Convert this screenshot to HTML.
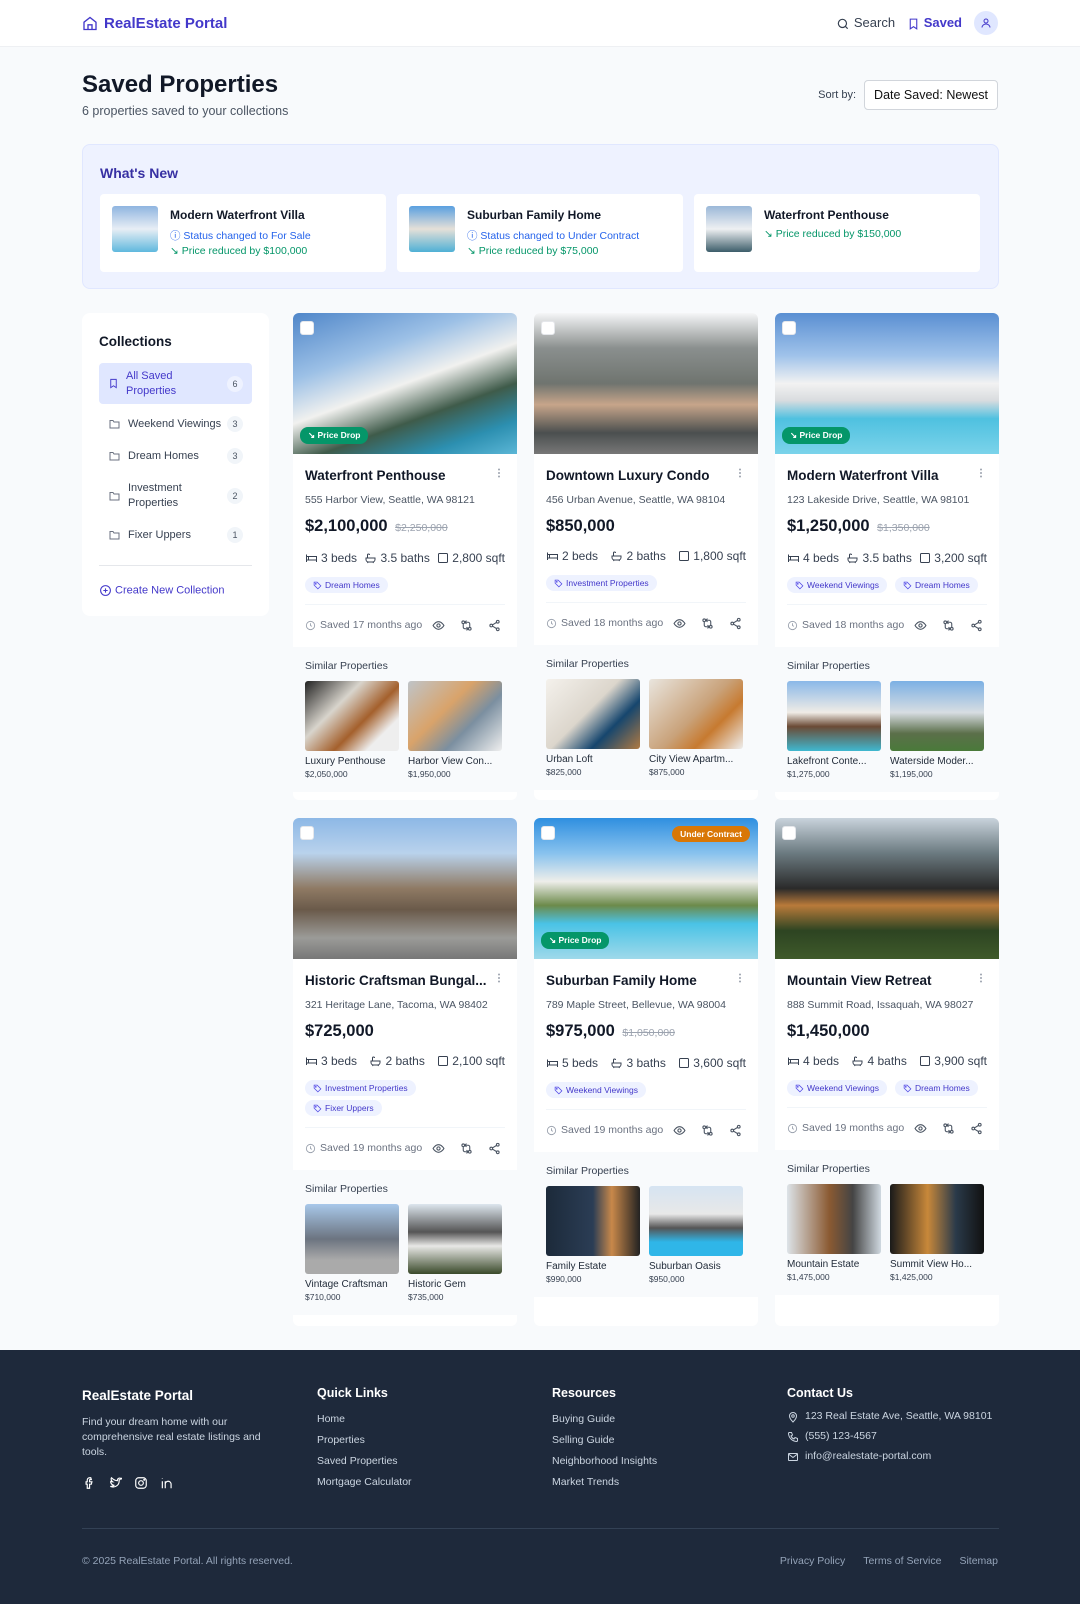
<!DOCTYPE html>
<html><head><meta charset="utf-8"><style>
*{box-sizing:border-box;margin:0;padding:0}
body{width:1080px;height:1604px;overflow:hidden;background:#f8fafc;font-family:"Liberation Sans",Arial,sans-serif;color:#111827}
svg{display:inline-block;vertical-align:middle}
.hdr{height:47px;background:#fff;border-bottom:1px solid #eef0f3;position:relative}
.logo{position:absolute;left:82px;top:15px;font-size:15px;font-weight:bold;color:#4338ca;display:flex;align-items:center;gap:6px}
.nav{position:absolute;right:82px;top:11px;display:flex;align-items:center;gap:12px;font-size:13px}
.av{width:24px;height:24px;border-radius:50%;background:#e0e7ff;display:flex;align-items:center;justify-content:center}
h1{position:absolute;left:82px;top:71px;font-size:24px;font-weight:bold}
.sub{position:absolute;left:82px;top:104px;font-size:12.5px;color:#4b5563}
.sort{position:absolute;right:82px;top:80px;display:flex;align-items:center;gap:8px;font-size:11px;color:#374151}
.sel{border:1px solid #d1d5db;background:#fff;border-radius:4px;height:30px;padding:0 9px;display:flex;align-items:center;font-size:12.5px;color:#111}
.wn{position:absolute;left:82px;top:144px;width:917px;height:145px;background:#eef2ff;border:1px solid #e0e7ff;border-radius:8px}
.wn h2{position:absolute;left:17px;top:20px;font-size:14px;font-weight:bold;color:#3730a3}
.wc{position:absolute;top:49px;width:286px;height:78px;background:#fff;border-radius:4px}
.wc .th{position:absolute;left:12px;top:12px;width:46px;height:46px;border-radius:3px}
.wc .t{position:absolute;left:70px;top:14px;font-size:12px;font-weight:bold;color:#111827}
.wc .l{position:absolute;left:70px;font-size:10.5px;white-space:nowrap}
.side{position:absolute;left:82px;top:313px;width:187px;height:303px;background:#fff;border-radius:8px}
.side h3{position:absolute;left:17px;top:21px;font-size:13.5px;font-weight:bold}
.ci{position:absolute;left:17px;width:153px;display:flex;align-items:center;font-size:11px;color:#374151;padding-left:9px}
.ci .n{margin-left:auto;margin-right:9px;width:16px;height:16px;border-radius:8px;background:#f1f5f9;font-size:9px;display:flex;align-items:center;justify-content:center;color:#4b5563}
.ci span.lb{margin-left:7px;line-height:15px}
.card{position:absolute;width:224px;background:#fff;border-radius:6px;overflow:hidden}
.img{height:141px;position:relative}
.cb{position:absolute;left:7px;top:8px;width:14px;height:14px;background:#fff;border-radius:3px;border:1px solid #e5e7eb}
.pd{position:absolute;left:7px;bottom:10px;background:#059669;color:#fff;font-size:8.5px;font-weight:bold;border-radius:8px;padding:3px 8px}
.uc{position:absolute;right:8px;top:8px;background:#d97706;color:#fff;font-size:8.5px;font-weight:bold;border-radius:8px;padding:3px 8px}
.bd{padding:12px 12px 0}
.tt{font-size:13.5px;font-weight:bold;line-height:20px;display:flex;justify-content:space-between;color:#111827}
.ad{font-size:10.5px;color:#4b5563;margin-top:6px;line-height:16px}
.pr{font-size:16.5px;font-weight:bold;margin-top:6px;line-height:24px}
.pr s{font-size:10.5px;color:#9ca3af;font-weight:normal;margin-left:3px}
.ft{font-size:12px;color:#374151;margin-top:9px;line-height:18px;display:flex;justify-content:space-between;white-space:nowrap}
.ft span{display:flex;align-items:center;gap:3px}
.tags{margin-top:10px;display:flex;flex-wrap:wrap;gap:4px 8px}
.tg{background:#eef2ff;color:#4338ca;font-size:8.5px;border-radius:8px;height:16px;padding:0 8px;display:flex;align-items:center;gap:3px}
.dv{height:1px;background:#f1f5f9;margin-top:11px}
.sv{display:flex;align-items:center;gap:4px;padding:10px 0 12px;font-size:10.5px;color:#6b7280;height:42px}
.sv .ic{margin-left:auto;display:flex;gap:15px;margin-right:4px}
.sim{background:#f8fafc;padding:12px 12px 12px}
.sim h4{font-size:10.5px;font-weight:normal;color:#374151;line-height:14px}
.ths{display:flex;gap:9px;margin-top:8px}
.ths div{width:94px}
.ths .p{height:70px;border-radius:3px}
.ths .nm{font-size:10px;color:#1f2937;margin-top:4px;line-height:13px;white-space:nowrap;overflow:hidden}
.ths .pp{font-size:8.5px;color:#374151;line-height:12px}
.foot{position:absolute;left:0;top:1350px;width:1080px;height:254px;background:#1e293b;color:#cbd5e1}
.fc{position:absolute;top:36px}
.fc h5{font-size:12.5px;font-weight:bold;color:#fff;margin-bottom:12px}
.fc p,.fc div{font-size:10.5px;line-height:15px}
.fc .r{margin-bottom:6px;display:flex;align-items:center;gap:6px}
</style></head><body>
<svg width="0" height="0" style="position:absolute"><defs>
<g id="eye" fill="none" stroke="#4b5563" stroke-width="2"><path d="M2 12s4-7 10-7 10 7 10 7-4 7-10 7S2 12 2 12z"/><circle cx="12" cy="12" r="3"/></g>
<g id="cmp" fill="none" stroke="#4b5563" stroke-width="2"><circle cx="6" cy="6" r="2.5"/><circle cx="18" cy="18" r="2.5"/><path d="M6 9v6a3 3 0 0 0 3 3h6M18 15V9a3 3 0 0 0-3-3H9"/><path d="M12 3l-3 3 3 3M12 21l3-3-3-3"/></g>
<g id="shr" fill="none" stroke="#4b5563" stroke-width="2"><circle cx="18" cy="5" r="2.5"/><circle cx="6" cy="12" r="2.5"/><circle cx="18" cy="19" r="2.5"/><path d="M8.5 10.7l7-4.2M8.5 13.3l7 4.2"/></g>
<g id="clk" fill="none" stroke="#9ca3af" stroke-width="2"><circle cx="12" cy="12" r="9"/><path d="M12 7v5l3 2"/></g>
<g id="bed" fill="none" stroke="#374151" stroke-width="2"><path d="M2 5v15M2 9h20v11M2 16h20M6 9v7"/></g>
<g id="bth" fill="none" stroke="#374151" stroke-width="2"><path d="M3 12h18v3a5 5 0 0 1-5 5H8a5 5 0 0 1-5-5zM6 12V6a2 2 0 0 1 4 0M7 20l-1 2M17 20l1 2"/></g>
<g id="sq" fill="none" stroke="#374151" stroke-width="2"><rect x="3" y="3" width="18" height="18" rx="2"/></g>
<g id="tag" fill="none" stroke="#4f46e5" stroke-width="2"><path d="M3 3h8l10 10-8 8L3 11z"/><circle cx="7.5" cy="7.5" r="1.2"/></g>
<g id="fol" fill="none" stroke="#6b7280" stroke-width="2"><path d="M3 5h6l2 3h10v12H3z"/></g>
<g id="dots" fill="#9ca3af"><circle cx="12" cy="5" r="2"/><circle cx="12" cy="12" r="2"/><circle cx="12" cy="19" r="2"/></g>
</defs></svg>
<div class="hdr">
 <div class="logo"><svg width="16" height="17" viewBox="0 0 24 24" fill="none" stroke="#4338ca" stroke-width="2"><path d="M3 10l9-7 9 7v11H3z"/><path d="M9 21v-7h6v7"/></svg>RealEstate Portal</div>
 <div class="nav"><span style="color:#374151"><svg width="14" height="14" viewBox="0 0 24 24" fill="none" stroke="#374151" stroke-width="2"><circle cx="11" cy="11" r="7"/><path d="M20 20l-4-4"/></svg> Search</span><span style="color:#4338ca;font-weight:bold"><svg width="13" height="14" viewBox="0 0 24 24" fill="none" stroke="#4338ca" stroke-width="2"><path d="M6 3h12v18l-6-4-6 4z"/></svg> Saved</span><div class="av"><svg width="12" height="14" viewBox="0 0 24 24" fill="none" stroke="#4338ca" stroke-width="2"><circle cx="12" cy="8" r="4"/><path d="M4 21c0-4 4-7 8-7s8 3 8 7"/></svg></div></div>
</div>
<h1>Saved Properties</h1>
<div class="sub">6 properties saved to your collections</div>
<div class="sort">Sort by: <div class="sel">Date Saved: Newest</div></div>

<div class="wn"><h2>What's New</h2>
 <div class="wc" style="left:17px"><div class="th" style="background:linear-gradient(#8fb5e0,#e8eef5 50%,#5fb8de)"></div><div class="t">Modern Waterfront Villa</div><div class="l" style="top:34px;color:#2563eb">ⓘ Status changed to For Sale</div><div class="l" style="top:51px;color:#059669">↘ Price reduced by $100,000</div></div>
 <div class="wc" style="left:314px"><div class="th" style="background:linear-gradient(#5aa0e0,#e5e0d8 50%,#4fb0d5)"></div><div class="t">Suburban Family Home</div><div class="l" style="top:34px;color:#2563eb">ⓘ Status changed to Under Contract</div><div class="l" style="top:51px;color:#059669">↘ Price reduced by $75,000</div></div>
 <div class="wc" style="left:611px"><div class="th" style="background:linear-gradient(#9bb8d8,#eef0f2 50%,#3c5d6a)"></div><div class="t">Waterfront Penthouse</div><div class="l" style="top:34px;color:#059669">↘ Price reduced by $150,000</div></div>
</div>

<div class="side"><h3>Collections</h3>
 <div class="ci" style="top:50px;height:41px;background:#e0e7ff;border-radius:4px;color:#4338ca"><svg width="11" height="13" viewBox="0 0 24 24" fill="none" stroke="#4338ca" stroke-width="2"><path d="M6 3h12v18l-6-4-6 4z"/></svg><span class="lb">All Saved<br>Properties</span><span class="n" style="background:#eef2ff">6</span></div>
 <div class="ci" style="top:103px;height:16px"><svg width="13" height="12" viewBox="0 0 24 24"><use href="#fol"/></svg><span class="lb">Weekend Viewings</span><span class="n">3</span></div>
 <div class="ci" style="top:135px;height:16px"><svg width="13" height="12" viewBox="0 0 24 24"><use href="#fol"/></svg><span class="lb">Dream Homes</span><span class="n">3</span></div>
 <div class="ci" style="top:168px;height:30px"><svg width="13" height="12" viewBox="0 0 24 24"><use href="#fol"/></svg><span class="lb">Investment<br>Properties</span><span class="n">2</span></div>
 <div class="ci" style="top:214px;height:16px"><svg width="13" height="12" viewBox="0 0 24 24"><use href="#fol"/></svg><span class="lb">Fixer Uppers</span><span class="n">1</span></div>
 <div style="position:absolute;left:17px;top:252px;width:153px;height:1px;background:#e5e7eb"></div>
 <div style="position:absolute;left:17px;top:271px;font-size:11px;color:#4338ca"><svg width="13" height="13" viewBox="0 0 24 24" fill="none" stroke="#4338ca" stroke-width="2"><circle cx="12" cy="12" r="9"/><path d="M12 8v8M8 12h8"/></svg> Create New Collection</div>
</div>

<!-- Row 1 -->
<div class="card" style="left:293px;top:313px;height:487px">
 <div class="img" style="background:linear-gradient(160deg,#4f86c9 0%,#9cc0e6 30%,#f1f1ef 50%,#3f5b4a 68%,#2c8fb0 85%,#5bb6d6)"><div class="cb"></div><div class="pd">↘ Price Drop</div></div>
 <div class="bd"><div class="tt">Waterfront Penthouse<svg width="12" height="14" viewBox="0 0 24 24"><use href="#dots"/></svg></div><div class="ad">555 Harbor View, Seattle, WA 98121</div><div class="pr">$2,100,000 <s>$2,250,000</s></div>
 <div class="ft"><span><svg width="13" height="12" viewBox="0 0 24 24"><use href="#bed"/></svg>3 beds</span><span><svg width="13" height="12" viewBox="0 0 24 24"><use href="#bth"/></svg>3.5 baths</span><span><svg width="12" height="12" viewBox="0 0 24 24"><use href="#sq"/></svg>2,800 sqft</span></div>
 <div class="tags"><div class="tg"><svg width="9" height="9" viewBox="0 0 24 24"><use href="#tag"/></svg>Dream Homes</div></div><div class="dv"></div>
 <div class="sv"><svg width="11" height="11" viewBox="0 0 24 24"><use href="#clk"/></svg>Saved 17 months ago<span class="ic"><svg width="13" height="13" viewBox="0 0 24 24"><use href="#eye"/></svg><svg width="13" height="13" viewBox="0 0 24 24"><use href="#cmp"/></svg><svg width="13" height="13" viewBox="0 0 24 24"><use href="#shr"/></svg></span></div></div>
 <div class="sim"><h4>Similar Properties</h4><div class="ths"><div><div class="p" style="background:linear-gradient(135deg,#222 0,#d8d4cc 35%,#a4602c 60%,#eee 80%)"></div><div class="nm">Luxury Penthouse</div><div class="pp">$2,050,000</div></div><div><div class="p" style="background:linear-gradient(135deg,#bfc4c8,#d9a36a 40%,#7b8fa0 65%,#efefef)"></div><div class="nm">Harbor View Con...</div><div class="pp">$1,950,000</div></div></div></div>
</div>
<div class="card" style="left:534px;top:313px;height:487px">
 <div class="img" style="background:linear-gradient(180deg,#f5f6f7 0%,#8a8f8e 25%,#6f746f 50%,#c7a58a 65%,#4b4f4f 85%,#777 100%)"><div class="cb"></div></div>
 <div class="bd"><div class="tt">Downtown Luxury Condo<svg width="12" height="14" viewBox="0 0 24 24"><use href="#dots"/></svg></div><div class="ad">456 Urban Avenue, Seattle, WA 98104</div><div class="pr">$850,000</div>
 <div class="ft"><span><svg width="13" height="12" viewBox="0 0 24 24"><use href="#bed"/></svg>2 beds</span><span><svg width="13" height="12" viewBox="0 0 24 24"><use href="#bth"/></svg>2 baths</span><span><svg width="12" height="12" viewBox="0 0 24 24"><use href="#sq"/></svg>1,800 sqft</span></div>
 <div class="tags"><div class="tg"><svg width="9" height="9" viewBox="0 0 24 24"><use href="#tag"/></svg>Investment Properties</div></div><div class="dv"></div>
 <div class="sv"><svg width="11" height="11" viewBox="0 0 24 24"><use href="#clk"/></svg>Saved 18 months ago<span class="ic"><svg width="13" height="13" viewBox="0 0 24 24"><use href="#eye"/></svg><svg width="13" height="13" viewBox="0 0 24 24"><use href="#cmp"/></svg><svg width="13" height="13" viewBox="0 0 24 24"><use href="#shr"/></svg></span></div></div>
 <div class="sim"><h4>Similar Properties</h4><div class="ths"><div><div class="p" style="background:linear-gradient(135deg,#f4f1ec,#dcd6cc 45%,#16466e 70%,#b07a42)"></div><div class="nm">Urban Loft</div><div class="pp">$825,000</div></div><div><div class="p" style="background:linear-gradient(135deg,#e9e5de,#c9a27a 50%,#c77a30 70%,#eee)"></div><div class="nm">City View Apartm...</div><div class="pp">$875,000</div></div></div></div>
</div>
<div class="card" style="left:775px;top:313px;height:487px">
 <div class="img" style="background:linear-gradient(180deg,#5a8fd2 0%,#9fc2ea 30%,#f2f2f2 50%,#d9dcdf 62%,#4fc1e0 75%,#7bd3ea)"><div class="cb"></div><div class="pd">↘ Price Drop</div></div>
 <div class="bd"><div class="tt">Modern Waterfront Villa<svg width="12" height="14" viewBox="0 0 24 24"><use href="#dots"/></svg></div><div class="ad">123 Lakeside Drive, Seattle, WA 98101</div><div class="pr">$1,250,000 <s>$1,350,000</s></div>
 <div class="ft"><span><svg width="13" height="12" viewBox="0 0 24 24"><use href="#bed"/></svg>4 beds</span><span><svg width="13" height="12" viewBox="0 0 24 24"><use href="#bth"/></svg>3.5 baths</span><span><svg width="12" height="12" viewBox="0 0 24 24"><use href="#sq"/></svg>3,200 sqft</span></div>
 <div class="tags"><div class="tg"><svg width="9" height="9" viewBox="0 0 24 24"><use href="#tag"/></svg>Weekend Viewings</div><div class="tg"><svg width="9" height="9" viewBox="0 0 24 24"><use href="#tag"/></svg>Dream Homes</div></div><div class="dv"></div>
 <div class="sv"><svg width="11" height="11" viewBox="0 0 24 24"><use href="#clk"/></svg>Saved 18 months ago<span class="ic"><svg width="13" height="13" viewBox="0 0 24 24"><use href="#eye"/></svg><svg width="13" height="13" viewBox="0 0 24 24"><use href="#cmp"/></svg><svg width="13" height="13" viewBox="0 0 24 24"><use href="#shr"/></svg></span></div></div>
 <div class="sim"><h4>Similar Properties</h4><div class="ths"><div><div class="p" style="background:linear-gradient(180deg,#8ab8e8,#f0ece6 45%,#6b4a35 65%,#3fb8d0)"></div><div class="nm">Lakefront Conte...</div><div class="pp">$1,275,000</div></div><div><div class="p" style="background:linear-gradient(180deg,#7cb0e4,#d7dde2 45%,#5b6f4a 75%,#4a7a3a)"></div><div class="nm">Waterside Moder...</div><div class="pp">$1,195,000</div></div></div></div>
</div>

<!-- Row 2 -->
<div class="card" style="left:293px;top:818px;height:508px">
 <div class="img" style="background:linear-gradient(180deg,#8db8e6 0%,#b9d2ec 25%,#8f7a64 50%,#6a5a4a 65%,#9b9b98 85%,#777)"><div class="cb"></div></div>
 <div class="bd"><div class="tt">Historic Craftsman Bungal...<svg width="12" height="14" viewBox="0 0 24 24"><use href="#dots"/></svg></div><div class="ad">321 Heritage Lane, Tacoma, WA 98402</div><div class="pr">$725,000</div>
 <div class="ft"><span><svg width="13" height="12" viewBox="0 0 24 24"><use href="#bed"/></svg>3 beds</span><span><svg width="13" height="12" viewBox="0 0 24 24"><use href="#bth"/></svg>2 baths</span><span><svg width="12" height="12" viewBox="0 0 24 24"><use href="#sq"/></svg>2,100 sqft</span></div>
 <div class="tags" style="flex-direction:column;align-items:flex-start"><div class="tg"><svg width="9" height="9" viewBox="0 0 24 24"><use href="#tag"/></svg>Investment Properties</div><div class="tg"><svg width="9" height="9" viewBox="0 0 24 24"><use href="#tag"/></svg>Fixer Uppers</div></div><div class="dv"></div>
 <div class="sv"><svg width="11" height="11" viewBox="0 0 24 24"><use href="#clk"/></svg>Saved 19 months ago<span class="ic"><svg width="13" height="13" viewBox="0 0 24 24"><use href="#eye"/></svg><svg width="13" height="13" viewBox="0 0 24 24"><use href="#cmp"/></svg><svg width="13" height="13" viewBox="0 0 24 24"><use href="#shr"/></svg></span></div></div>
 <div class="sim"><h4>Similar Properties</h4><div class="ths"><div><div class="p" style="background:linear-gradient(180deg,#a8c8ea,#6c7480 50%,#aaa 80%)"></div><div class="nm">Vintage Craftsman</div><div class="pp">$710,000</div></div><div><div class="p" style="background:linear-gradient(180deg,#dde6ee,#555 40%,#e8e8e6 60%,#3a4a2a)"></div><div class="nm">Historic Gem</div><div class="pp">$735,000</div></div></div></div>
</div>
<div class="card" style="left:534px;top:818px;height:508px">
 <div class="img" style="background:linear-gradient(180deg,#2f8fe0 0%,#88c2ee 25%,#eeeeea 45%,#6c8a4a 62%,#4ac3e6 75%,#9fd9ea 100%)"><div class="cb"></div><div class="uc">Under Contract</div><div class="pd">↘ Price Drop</div></div>
 <div class="bd"><div class="tt">Suburban Family Home<svg width="12" height="14" viewBox="0 0 24 24"><use href="#dots"/></svg></div><div class="ad">789 Maple Street, Bellevue, WA 98004</div><div class="pr">$975,000 <s>$1,050,000</s></div>
 <div class="ft"><span><svg width="13" height="12" viewBox="0 0 24 24"><use href="#bed"/></svg>5 beds</span><span><svg width="13" height="12" viewBox="0 0 24 24"><use href="#bth"/></svg>3 baths</span><span><svg width="12" height="12" viewBox="0 0 24 24"><use href="#sq"/></svg>3,600 sqft</span></div>
 <div class="tags"><div class="tg"><svg width="9" height="9" viewBox="0 0 24 24"><use href="#tag"/></svg>Weekend Viewings</div></div><div class="dv"></div>
 <div class="sv"><svg width="11" height="11" viewBox="0 0 24 24"><use href="#clk"/></svg>Saved 19 months ago<span class="ic"><svg width="13" height="13" viewBox="0 0 24 24"><use href="#eye"/></svg><svg width="13" height="13" viewBox="0 0 24 24"><use href="#cmp"/></svg><svg width="13" height="13" viewBox="0 0 24 24"><use href="#shr"/></svg></span></div></div>
 <div class="sim"><h4>Similar Properties</h4><div class="ths"><div><div class="p" style="background:linear-gradient(90deg,#1c2a3a,#2b3d55 50%,#c8884a 70%,#222)"></div><div class="nm">Family Estate</div><div class="pp">$990,000</div></div><div><div class="p" style="background:linear-gradient(180deg,#d6e4f2,#e8e8e8 40%,#555 60%,#2fb6e8 80%)"></div><div class="nm">Suburban Oasis</div><div class="pp">$950,000</div></div></div></div>
</div>
<div class="card" style="left:775px;top:818px;height:508px">
 <div class="img" style="background:linear-gradient(180deg,#c9d3dc 0%,#6b7a80 25%,#2a2a2a 50%,#b97a3a 62%,#2d4422 80%,#3f5a2a)"><div class="cb"></div></div>
 <div class="bd"><div class="tt">Mountain View Retreat<svg width="12" height="14" viewBox="0 0 24 24"><use href="#dots"/></svg></div><div class="ad">888 Summit Road, Issaquah, WA 98027</div><div class="pr">$1,450,000</div>
 <div class="ft"><span><svg width="13" height="12" viewBox="0 0 24 24"><use href="#bed"/></svg>4 beds</span><span><svg width="13" height="12" viewBox="0 0 24 24"><use href="#bth"/></svg>4 baths</span><span><svg width="12" height="12" viewBox="0 0 24 24"><use href="#sq"/></svg>3,900 sqft</span></div>
 <div class="tags"><div class="tg"><svg width="9" height="9" viewBox="0 0 24 24"><use href="#tag"/></svg>Weekend Viewings</div><div class="tg"><svg width="9" height="9" viewBox="0 0 24 24"><use href="#tag"/></svg>Dream Homes</div></div><div class="dv"></div>
 <div class="sv"><svg width="11" height="11" viewBox="0 0 24 24"><use href="#clk"/></svg>Saved 19 months ago<span class="ic"><svg width="13" height="13" viewBox="0 0 24 24"><use href="#eye"/></svg><svg width="13" height="13" viewBox="0 0 24 24"><use href="#cmp"/></svg><svg width="13" height="13" viewBox="0 0 24 24"><use href="#shr"/></svg></span></div></div>
 <div class="sim"><h4>Similar Properties</h4><div class="ths"><div><div class="p" style="background:linear-gradient(90deg,#dde3e8,#8b5a32 45%,#444 70%,#cfd8e0)"></div><div class="nm">Mountain Estate</div><div class="pp">$1,475,000</div></div><div><div class="p" style="background:linear-gradient(90deg,#1a1a1a,#c8883a 40%,#2a3a4a 70%,#111)"></div><div class="nm">Summit View Ho...</div><div class="pp">$1,425,000</div></div></div></div>
</div>

<div class="foot">
 <div class="fc" style="left:82px;top:38px;width:200px"><h5 style="font-size:13.5px">RealEstate Portal</h5><p>Find your dream home with our comprehensive real estate listings and tools.</p>
 <div style="margin-top:16px;display:flex;gap:12px">
  <svg width="14" height="14" viewBox="0 0 24 24" fill="none" stroke="#fff" stroke-width="2"><path d="M15 3h-2a4 4 0 0 0-4 4v3H7v4h2v7h4v-7h3l1-4h-4V7a1 1 0 0 1 1-1h2z"/></svg>
  <svg width="14" height="14" viewBox="0 0 24 24" fill="none" stroke="#fff" stroke-width="2"><path d="M22 4s-1 2-3 3c1 8-6 14-15 11 3 0 5-1 6-2-5-1-6-6-5-7 1 1 2 1 3 1-3-2-3-6-2-7 3 3 6 5 10 5 0-4 4-6 7-3 1 0 2-1 3-1z"/></svg>
  <svg width="14" height="14" viewBox="0 0 24 24" fill="none" stroke="#fff" stroke-width="2"><rect x="3" y="3" width="18" height="18" rx="5"/><circle cx="12" cy="12" r="4"/><circle cx="17.5" cy="6.5" r="0.8"/></svg>
  <svg width="14" height="14" viewBox="0 0 24 24" fill="none" stroke="#fff" stroke-width="2"><path d="M4 9v12M4 4v1M9 21V9M9 14a5 5 0 0 1 10 0v7"/></svg>
 </div></div>
 <div class="fc" style="left:317px"><h5>Quick Links</h5><div class="r">Home</div><div class="r">Properties</div><div class="r">Saved Properties</div><div class="r">Mortgage Calculator</div></div>
 <div class="fc" style="left:552px"><h5>Resources</h5><div class="r">Buying Guide</div><div class="r">Selling Guide</div><div class="r">Neighborhood Insights</div><div class="r">Market Trends</div></div>
 <div class="fc" style="left:787px"><h5>Contact Us</h5>
  <div class="r" style="margin-top:-3px;margin-bottom:5px"><svg width="12" height="12" viewBox="0 0 24 24" fill="none" stroke="#cbd5e1" stroke-width="2"><path d="M12 22s7-7 7-12a7 7 0 0 0-14 0c0 5 7 12 7 12z"/><circle cx="12" cy="10" r="2.5"/></svg>123 Real Estate Ave, Seattle, WA 98101</div>
  <div class="r" style="margin-bottom:5px"><svg width="12" height="12" viewBox="0 0 24 24" fill="none" stroke="#cbd5e1" stroke-width="2"><path d="M5 3h4l2 5-3 2a11 11 0 0 0 6 6l2-3 5 2v4a2 2 0 0 1-2 2A17 17 0 0 1 3 5a2 2 0 0 1 2-2z"/></svg>(555) 123-4567</div>
  <div class="r"><svg width="12" height="12" viewBox="0 0 24 24" fill="none" stroke="#cbd5e1" stroke-width="2"><rect x="3" y="5" width="18" height="14" rx="1"/><path d="M3 6l9 7 9-7"/></svg>info@realestate-portal.com</div></div>
 <div style="position:absolute;left:82px;top:178px;width:917px;height:1px;background:#334155"></div>
 <div style="position:absolute;left:82px;top:205px;font-size:10.5px;color:#94a3b8">© 2025 RealEstate Portal. All rights reserved.</div>
 <div style="position:absolute;right:82px;top:205px;font-size:10.5px;color:#94a3b8;display:flex;gap:18px"><span>Privacy Policy</span><span>Terms of Service</span><span>Sitemap</span></div>
</div>
</body></html>
